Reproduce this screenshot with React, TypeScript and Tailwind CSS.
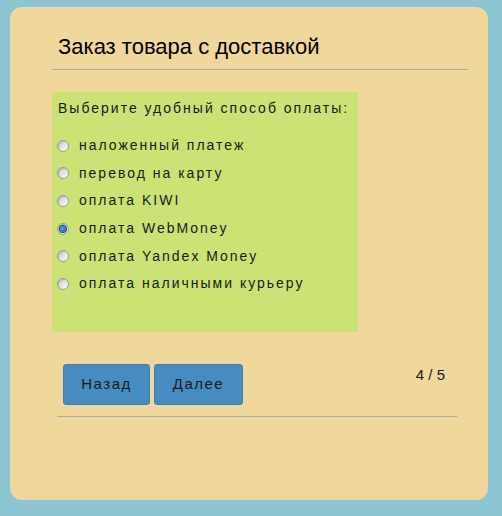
const options = [
  "наложенный платеж",
  "перевод на карту",
  "оплата KIWI",
  "оплата WebMoney",
  "оплата Yandex Money",
  "оплата наличными курьеру",
];

function Radio({ checked }: { checked?: boolean }) {
  return (
    <span className="relative flex h-[12px] w-[12px] shrink-0 items-center justify-center rounded-full border border-[#9a9a9a] bg-[linear-gradient(135deg,#c8c8c8,#ffffff)] shadow-[inset_1px_1px_1px_rgba(0,0,0,0.15)]">
      {checked && (
        <span className="h-[6px] w-[6px] rounded-full bg-[radial-gradient(circle_at_40%_40%,#5aa7e6,#0b4f8f)] ring-1 ring-[#1d3f66]" />
      )}
    </span>
  );
}

export default function App() {
  return (
    <div
      className="min-h-[516px] bg-[#8ec5d3] pl-[10px] pt-[7px]"
      style={{ fontFamily: '"Liberation Sans", Arial, sans-serif' }}
    >
      <div className="h-[493px] w-[478px] rounded-[12px] bg-[#f0d79b] pl-[42px] pt-[27px]">
        <h1 className="pl-[6px] text-[22px] leading-[25px] text-black">Заказ товара с доставкой</h1>
        <div className="mt-[10px] h-px w-[416px] bg-[#a9a9a9]" />

        <div className="mt-[22px] h-[240px] w-[306px] bg-[#cbe374] pl-[5px] pt-[6px] text-[#1a1a1a]">
          <p className="pl-px text-[14px] leading-[20px] tracking-[2px]">Выберите удобный способ оплаты:</p>
          <ul className="mt-[14px]">
            {options.map((o, i) => (
              <li key={o} className="flex h-[27.6px] items-center gap-[10px]">
                <Radio checked={i === 3} />
                <span className="text-[14px] tracking-[2px]">{o}</span>
              </li>
            ))}
          </ul>
        </div>

        <div className="ml-[5px] mt-[32px] w-[400px]">
          <div className="flex items-start pl-[6px] pr-[12px]">
            <button className="h-[41px] w-[87px] rounded-[3px] border border-[#3f7fb2] bg-[#478cc0] text-[15px] tracking-[1.5px] text-[#1a1a1a]">
              Назад
            </button>
            <button className="ml-[4px] h-[41px] w-[89px] rounded-[3px] border border-[#3f7fb2] bg-[#478cc0] text-[15px] tracking-[1.5px] text-[#1a1a1a]">
              Далее
            </button>
            <span className="ml-auto mt-[2px] text-[15px] leading-[18px] text-[#1a1a1a]">4 / 5</span>
          </div>
          <div className="mt-[11px] h-px w-[400px] bg-[#a9a9a9]" />
        </div>
      </div>
    </div>
  );
}
